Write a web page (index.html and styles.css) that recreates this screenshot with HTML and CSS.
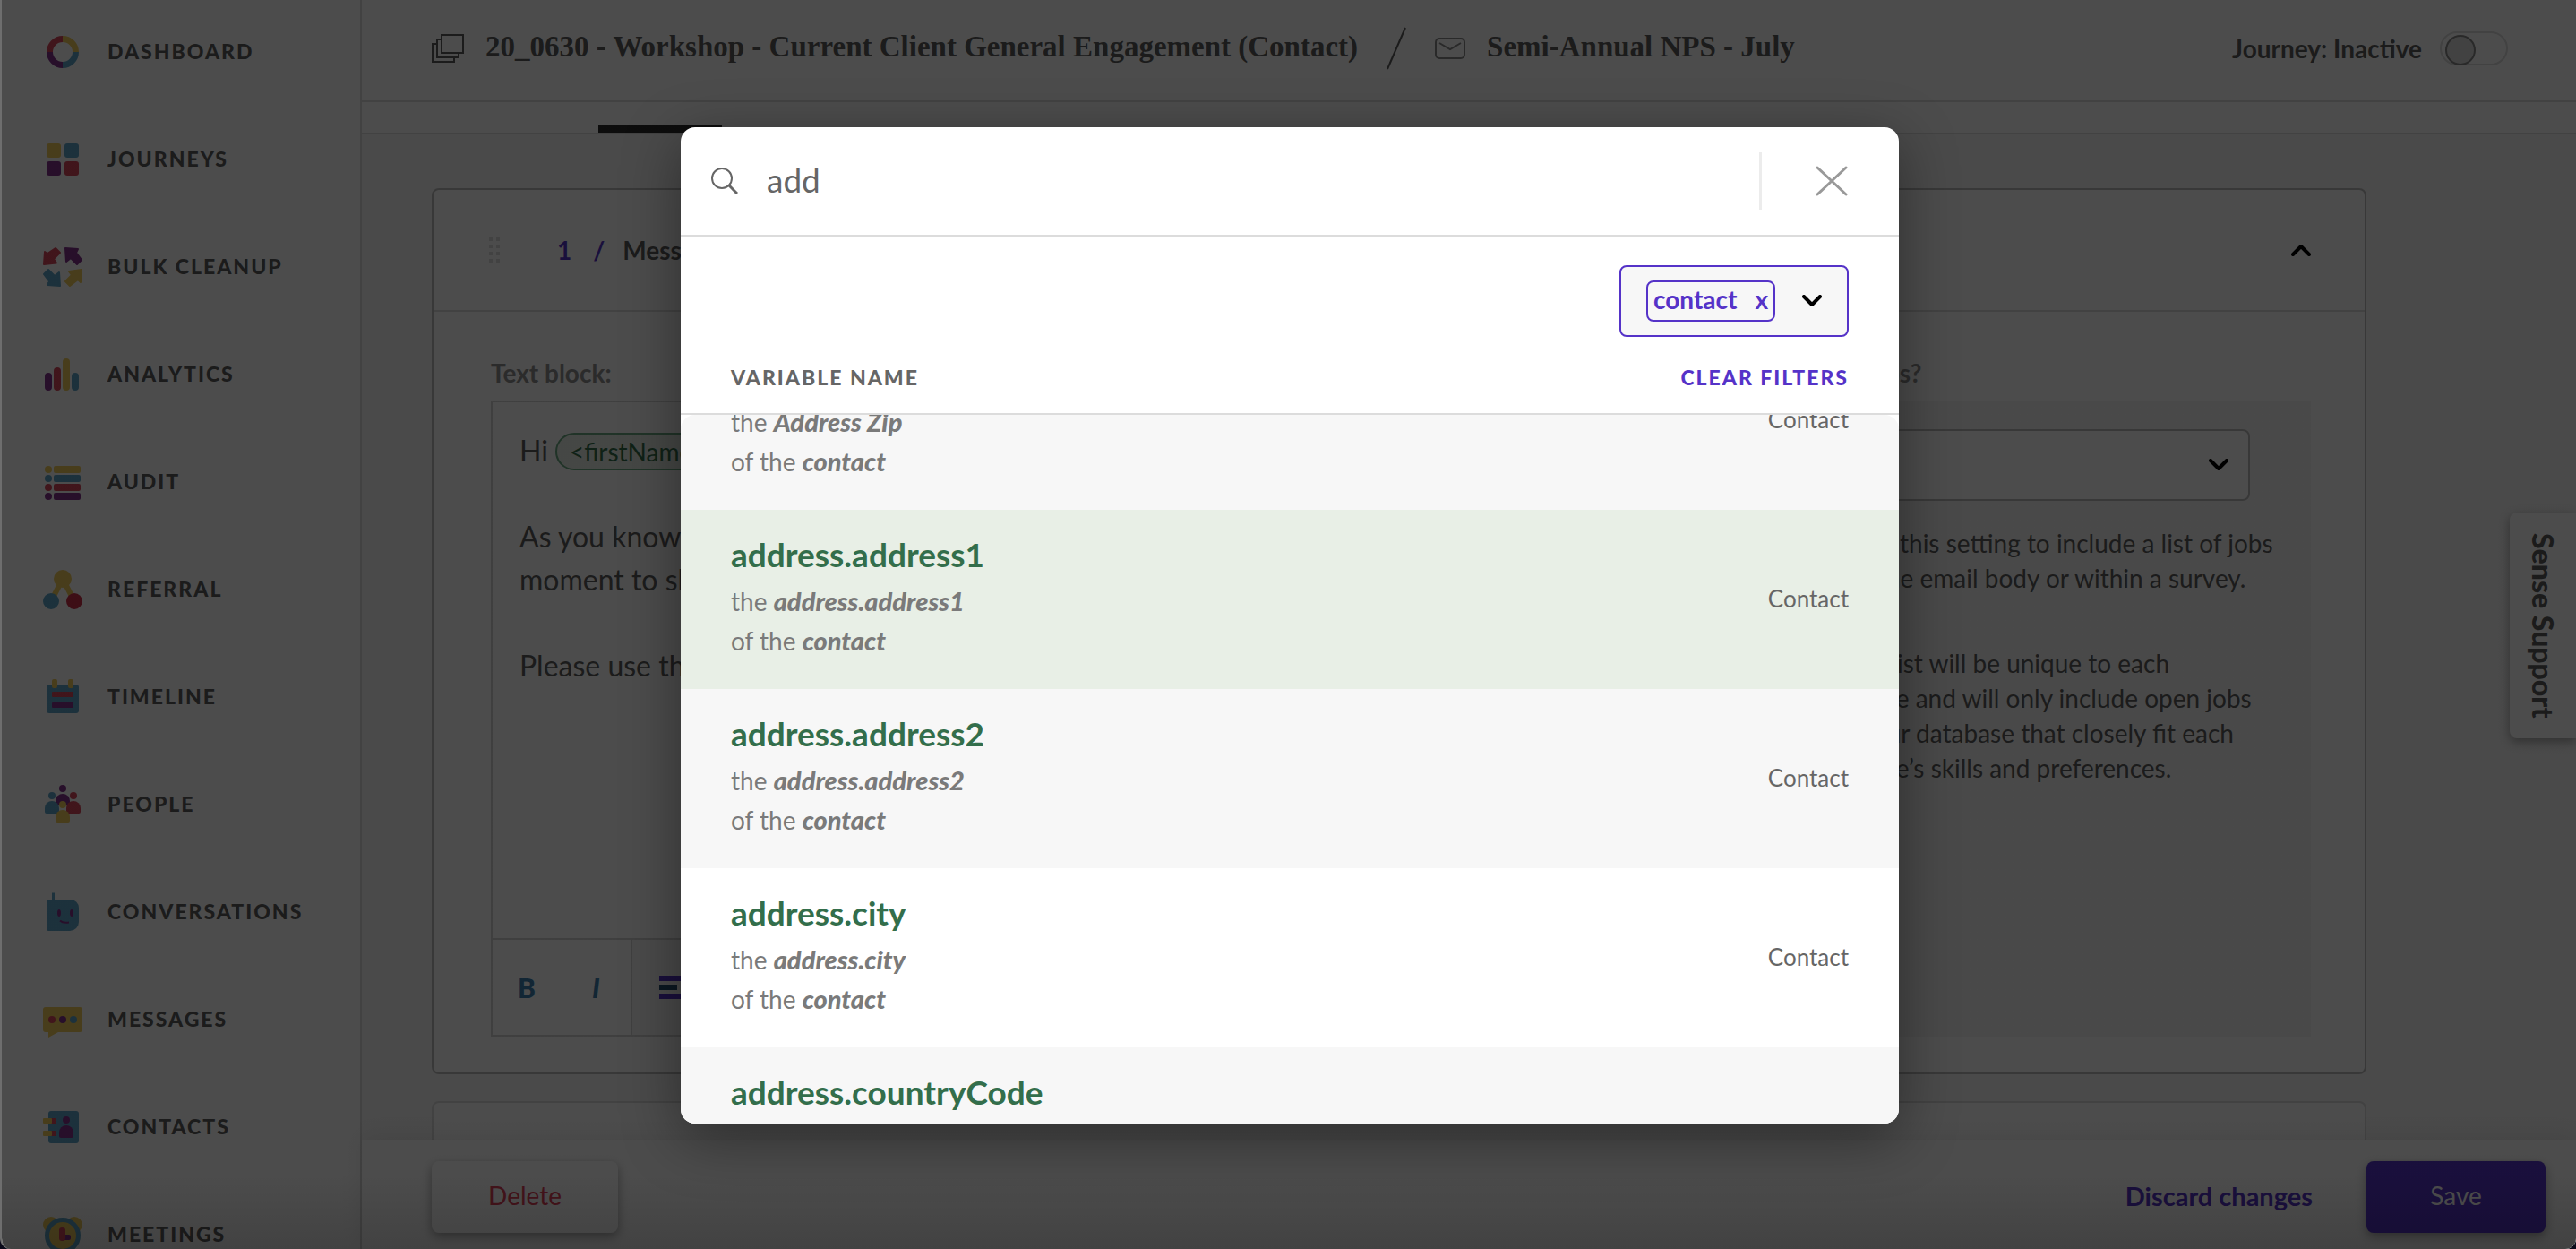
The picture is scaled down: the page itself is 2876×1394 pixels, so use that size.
FILE: index.html
```html
<!DOCTYPE html>
<html lang="en">
<head>
<meta charset="utf-8">
<title>Semi-Annual NPS - July</title>
<link rel="stylesheet" href="styles.css">
</head>
<body>
<div class="app">
  <nav class="sidebar" aria-label="Main">
    <a class="nav-item" href="#dashboard">
      <svg class="nav-icon" viewBox="0 0 44 44" fill="none" stroke-width="7"><path class="s-red" d="M7.500 23A14.500 14.500 0 0 1 22 8.500"/><path class="s-yellow" d="M22 8.500A14.500 14.500 0 0 1 36.500 23"/><path class="s-blue" d="M36.500 23A14.500 14.500 0 0 1 22 37.500"/><path class="s-purple" d="M22 37.500A14.500 14.500 0 0 1 7.500 23"/></svg>
      <span>DASHBOARD</span>
    </a>
    <a class="nav-item" href="#journeys">
      <svg class="nav-icon" viewBox="0 0 44 44"><rect class="yellow" x="4" y="5" width="16" height="16" rx="3"/><rect class="blue" x="24" y="5" width="16" height="16" rx="3"/><rect class="purple" x="4" y="25" width="16" height="16" rx="3"/><rect class="red" x="24" y="25" width="16" height="16" rx="3"/></svg>
      <span>JOURNEYS</span>
    </a>
    <a class="nav-item" href="#cleanup">
      <svg class="nav-icon" viewBox="0 0 44 44" stroke-width="2" stroke-linejoin="round"><path class="red s-red" d="M1 20L2 6L5 8L14 2L19 7L12 14L15 18.500Z"/><path class="purple s-purple" d="M25 2L39 3L37 7L43 15L38 20L31 13L26 17Z"/><path class="blue s-blue" d="M19 44L5 43L7 39L1 31L6 26L13 33L18 29Z"/><path class="yellow s-yellow" d="M43 26L42 40L39 37L30 44L25 39L32 32L29 28Z"/></svg>
      <span>BULK CLEANUP</span>
    </a>
    <a class="nav-item" href="#analytics">
      <svg class="nav-icon" viewBox="0 0 44 44"><rect class="purple" x="2" y="21" width="8" height="20" rx="4"/><rect class="red" x="12" y="15" width="8" height="26" rx="4"/><rect class="yellow" x="22" y="5" width="8" height="36" rx="4"/><rect class="blue" x="32" y="21" width="8" height="20" rx="4"/></svg>
      <span>ANALYTICS</span>
    </a>
    <a class="nav-item" href="#audit">
      <svg class="nav-icon" viewBox="0 0 44 44"><g class="yellow"><circle cx="6" cy="9" r="4"/><rect x="12" y="5" width="30" height="8" rx="2"/></g><g class="blue"><circle cx="6" cy="19" r="4"/><rect x="12" y="15" width="30" height="8" rx="2"/></g><g class="red"><circle cx="6" cy="29" r="4"/><rect x="12" y="25" width="30" height="8" rx="2"/></g><g class="purple"><circle cx="6" cy="39" r="4"/><rect x="12" y="35" width="30" height="8" rx="2"/></g></svg>
      <span>AUDIT</span>
    </a>
    <a class="nav-item" href="#referral">
      <svg class="nav-icon" viewBox="0 0 44 44"><path class="s-yellow" d="M9 36L22 11L35 36" fill="none" stroke-width="6"/><circle class="yellow" cx="22" cy="11" r="10"/><circle class="blue" cx="9" cy="36" r="9"/><circle class="crimson" cx="35" cy="36" r="9"/></svg>
      <span>REFERRAL</span>
    </a>
    <a class="nav-item" href="#timeline">
      <svg class="nav-icon" viewBox="0 0 44 44"><rect class="blue" x="4" y="9" width="36" height="32" rx="3"/><rect class="yellow" x="10" y="3" width="6" height="10" rx="2"/><rect class="yellow" x="28" y="3" width="6" height="10" rx="2"/><rect class="red" x="10" y="17" width="24" height="6" rx="1"/><rect class="purple" x="10" y="29" width="24" height="6" rx="1"/></svg>
      <span>TIMELINE</span>
    </a>
    <a class="nav-item" href="#people">
      <svg class="nav-icon" viewBox="0 0 44 44"><g class="purple"><circle cx="22" cy="5" r="4"/><path d="M14 24V19a8 8 0 0 1 16 0V24Z"/></g><g class="blue"><circle cx="10" cy="13" r="4"/><path d="M2 31V27a8 8 0 0 1 16 0V33H4a2 2 0 0 1-2-2Z"/></g><g class="red"><circle cx="34" cy="13" r="4"/><path d="M26 33V27a8 8 0 0 1 16 0V31a2 2 0 0 1-2 2Z"/></g><g class="yellow"><circle cx="22" cy="23" r="4"/><path d="M14 41V37a8 8 0 0 1 16 0V41a2 2 0 0 1-2 2H16a2 2 0 0 1-2-2Z"/></g></svg>
      <span>PEOPLE</span>
    </a>
    <a class="nav-item" href="#conversations">
      <svg class="nav-icon" viewBox="0 0 44 44"><path class="blue" d="M10 9V1.500h3V9H31a9 9 0 0 1 9 9V34a10 10 0 0 1-10 10H6a2 2 0 0 1-2-2V11a2 2 0 0 1 2-2Z"/><ellipse class="purple" cx="18" cy="24" rx="2" ry="4"/><ellipse class="purple" cx="32" cy="24" rx="2" ry="4"/><path class="s-purple" d="M19 32.500q3 3 10 2" fill="none" stroke-width="2"/></svg>
      <span>CONVERSATIONS</span>
    </a>
    <a class="nav-item" href="#messages">
      <svg class="nav-icon" viewBox="0 0 44 44"><path class="yellow" d="M3 9H41a3 3 0 0 1 3 3V34a3 3 0 0 1-3 3H17L6 43V37H3a3 3 0 0 1-3-3V12a3 3 0 0 1 3-3Z"/><circle class="red" cx="10" cy="23" r="4"/><circle class="purple" cx="22" cy="23" r="4"/><circle class="blue" cx="34" cy="23" r="4"/></svg>
      <span>MESSAGES</span>
    </a>
    <a class="nav-item" href="#contacts">
      <svg class="nav-icon" viewBox="0 0 44 44"><rect class="blue" x="6" y="5" width="34" height="36" rx="3"/><g class="red"><rect x="8" y="13" width="6" height="6"/><rect x="8" y="27" width="6" height="6"/></g><g class="yellow"><rect x="0" y="13" width="10" height="6" rx="1"/><rect x="0" y="27" width="10" height="6" rx="1"/></g><g class="purple"><circle cx="26" cy="15" r="4"/><path d="M18 33V29a8 8 0 0 1 16 0V33a2 2 0 0 1-2 2H20a2 2 0 0 1-2-2Z"/></g></svg>
      <span>CONTACTS</span>
    </a>
    <a class="nav-item" href="#meetings">
      <svg class="nav-icon" viewBox="0 0 44 44"><circle class="yellow" cx="9" cy="12" r="9"/><circle class="yellow" cx="35" cy="12" r="9"/><circle class="yellow s-blue" cx="22" cy="24" r="17.500" stroke-width="5"/><rect class="purple" x="22" y="23" width="9" height="6" rx="2"/><rect class="red" x="18" y="15" width="7" height="15" rx="3"/></svg>
      <span>MEETINGS</span>
    </a>
  </nav>

  <main class="main">
    <header class="header">
      <svg class="stack-icon" viewBox="0 0 36 34" fill="none" stroke="currentColor" stroke-width="2"><path d="M11 2H35V22H11Z"/><path d="M11 7H6V27H30V22M6 12H1V32H25V27"/></svg>
      <a class="crumb" href="#journey">20_0630 - Workshop - Current Client General Engagement (Contact)</a>
      <svg class="slash-icon" viewBox="0 0 22 48" fill="none" stroke="currentColor" stroke-width="2"><path d="M1 47L21 1"/></svg>
      <svg class="mail-icon" viewBox="0 0 34 24" fill="none" stroke="currentColor" stroke-width="2"><rect x="1" y="1" width="32" height="22" rx="4"/><path d="M5 6L17 13L29 6"/></svg>
      <h1 class="crumb">Semi-Annual NPS - July</h1>
      <label class="journey-switch">Journey: Inactive<input type="checkbox" class="switch"></label>
    </header>
    <div class="tabs"><a class="tab" href="#content" aria-label="Content"></a></div>

    <div class="content">
      <section class="card">
        <div class="card-head">
          <svg class="drag-icon" viewBox="0 0 12 28" fill="currentColor"><path d="M0 0h4v4H0zM8 0h4v4H8zM0 8h4v4H0zM8 8h4v4H8zM0 16h4v4H0zM8 16h4v4H8zM0 24h4v4H0zM8 24h4v4H8z"/></svg>
          <span class="card-number">1</span><span class="card-slash">/</span>
          <h2 class="card-title">Message</h2>
          <button class="icon-button" aria-label="Collapse"><svg class="chevron" viewBox="0 0 22 14"><path d="M2 12L11 3L20 12"/></svg></button>
        </div>
        <div class="card-body">
          <div class="field">
            <h3 class="field-label">Text block:</h3>
            <div class="editor">
              <div class="editor-text">
                <p>Hi <span class="token">&lt;firstName&gt;</span>,</p>
                <p>As you know, we value your feedback. Please take a<br>moment to share your thoughts with us.</p>
                <p>Please use the link below to get started.</p>
              </div>
              <div class="toolbar">
                <div class="tool-group">
                  <button class="tool">B</button><button class="tool tool-italic">I</button>
                </div>
                <button class="tool-align" aria-label="Align left"><svg class="align-icon" viewBox="0 0 28 26"><path fill="#5533c8" d="M0 0h28v6H0zM0 20h28v6H0z"/><path fill="#245070" d="M0 10h20v6H0z"/></svg></button>
              </div>
            </div>
          </div>
          <div class="field">
            <label class="field-label" for="jobs">Recommend jobs?</label>
            <div class="jobs-panel">
              <div class="select-wrap">
                <select id="jobs" class="jobs-select"><option>None</option></select>
                <svg class="chevron" viewBox="0 0 22 14"><path d="M2 2L11 11L20 2"/></svg>
              </div>
              <p>Activate this setting to include a list of jobs<br>within the email body or within a survey.</p>
              <p>The job list will be unique to each<br>candidate and will only include open jobs<br>from your database that closely fit each<br>candidate’s skills and preferences.</p>
            </div>
          </div>
        </div>
      </section>
      <section class="card card-next"></section>
    </div>

    <footer class="footer">
      <button class="btn btn-delete">Delete</button>
      <button class="btn-link">Discard changes</button>
      <button class="btn btn-save">Save</button>
    </footer>
  </main>

  <button class="support">Sense Support</button>

  <div class="overlay">
    <div class="modal" role="dialog" aria-label="Insert variable">
      <div class="search">
        <svg class="search-icon" viewBox="0 0 30 30" fill="none" stroke="currentColor" stroke-width="2"><circle cx="12" cy="12" r="11"/><path d="M20 20L29 29" stroke-width="3"/></svg>
        <input class="search-input" type="text" value="add" aria-label="Search variables">
        <button class="close" aria-label="Close"><svg class="close-icon" viewBox="0 0 36 34" fill="none" stroke="currentColor" stroke-width="3" stroke-linecap="round"><path d="M2 2L34 32M34 2L2 32"/></svg></button>
      </div>
      <div class="filters">
        <div class="filter-box">
          <button class="chip">contact<span>x</span></button>
          <button class="icon-button" aria-label="Open filters"><svg class="chevron" viewBox="0 0 22 14"><path d="M2 2L11 11L20 2"/></svg></button>
        </div>
        <div class="list-head">
          <span>VARIABLE NAME</span>
          <button class="clear">CLEAR FILTERS</button>
        </div>
      </div>
      <ul class="list" id="variables">
        <li><button class="row"><span class="name">address.zip</span><span class="desc">the <em>Address Zip</em><br>of the <em>contact</em></span><span class="entity">Contact</span></button></li>
        <li><button class="row row-active"><span class="name">address.address1</span><span class="desc">the <em>address.address1</em><br>of the <em>contact</em></span><span class="entity">Contact</span></button></li>
        <li><button class="row"><span class="name">address.address2</span><span class="desc">the <em>address.address2</em><br>of the <em>contact</em></span><span class="entity">Contact</span></button></li>
        <li><button class="row"><span class="name">address.city</span><span class="desc">the <em>address.city</em><br>of the <em>contact</em></span><span class="entity">Contact</span></button></li>
        <li><button class="row"><span class="name">address.countryCode</span><span class="desc">the <em>address.countryCode</em><br>of the <em>contact</em></span><span class="entity">Contact</span></button></li>
      </ul>
    </div>
  </div>
</div>
<script src="list.js"></script>
</body>
</html>
```
FILE: list.js
```js
// Bring the highlighted variable into view, keeping part of the previous row visible.
const list = document.getElementById('variables');
const active = list.querySelector('.row-active');
list.scrollTop = active.offsetTop - list.offsetTop - 106;
```
FILE: styles.css
```css
* { box-sizing: border-box; }

html { background: #0a0a1a; }

body {
  margin: 0;
  font-family: Lato, "Open Sans", sans-serif;
  font-size: 28px;
  color: #5c5c5c;
}

button, input, select { font: inherit; color: inherit; }
button { border: 0; padding: 0; background: none; text-align: left; cursor: pointer; }
a { color: inherit; text-decoration: none; }
h1, h2, h3, p, ul { margin: 0; padding: 0; }

.app {
  position: relative;
  display: flex;
  height: 100vh;
  overflow: hidden;
  background: #fff;
  border-left: 2px solid #6e6e6e;
  border-radius: 0 0 12px 12px;
}

/* Sidebar */
.sidebar {
  flex: none;
  width: 402px;
  display: flex;
  flex-direction: column;
  gap: 6px;
  overflow: hidden;
  border-right: 2px solid #dcdcdc;
}
.nav-item {
  flex: none;
  height: 114px;
  padding-left: 46px;
  display: flex;
  align-items: center;
  gap: 28px;
  font-size: 23px;
  font-weight: 900;
  letter-spacing: 2px;
}
.nav-icon { width: 44px; height: 44px; overflow: visible; }

.red { fill: #d8485c; }
.crimson { fill: #cc3048; }
.yellow { fill: #f0cc5c; }
.blue { fill: #5fa5c8; }
.purple { fill: #84328c; }
.s-red { stroke: #d8485c; }
.s-yellow { stroke: #f0cc5c; }
.s-blue { stroke: #5fa5c8; }
.s-purple { stroke: #84328c; }

/* Main column */
.main { flex: 1; min-width: 0; display: flex; flex-direction: column; }

.header {
  flex: none;
  height: 114px;
  padding: 0 76px 4px 78px;
  display: flex;
  align-items: center;
  border-bottom: 2px solid #dcdcdc;
}
.crumb {
  padding-bottom: 4px;
  font-family: "Liberation Serif", serif;
  font-size: 33px;
  font-weight: 700;
  line-height: 40px;
  white-space: nowrap;
}
.stack-icon { flex: none; width: 36px; height: 34px; margin-right: 24px; }
.slash-icon { flex: none; width: 22px; height: 48px; margin: 0 32px; }
.mail-icon { flex: none; width: 34px; height: 24px; margin-right: 24px; color: #8a8a8a; }
.journey-switch {
  margin-left: auto;
  display: flex;
  align-items: center;
  gap: 20px;
  font-weight: 700;
  white-space: nowrap;
}
.switch {
  appearance: none;
  margin: 0;
  width: 76px;
  height: 38px;
  padding: 2px 4px;
  border: 2px solid #dcdcdc;
  border-radius: 19px;
}
.switch::before {
  content: "";
  display: block;
  width: 30px;
  height: 30px;
  border: 2px solid #8a8a8a;
  border-radius: 50%;
  background: #dcdcdc;
}

.tabs {
  flex: none;
  height: 36px;
  padding-left: 264px;
  display: flex;
  align-items: flex-end;
  border-bottom: 2px solid #dcdcdc;
}
.tab { width: 138px; height: 8px; background: #2c2c2c; }

.content {
  flex: 1;
  min-height: 0;
  overflow: hidden;
  padding: 60px 234px 0 78px;
  background: #f7f7f7;
}
.card { background: #fff; border: 2px solid #bcbcbc; border-radius: 8px; }
.card-next { height: 200px; margin-top: 30px; border-color: #dcdcdc; }
.card-head {
  height: 136px;
  padding: 0 60px 0 62px;
  display: flex;
  align-items: center;
  border-bottom: 2px solid #dcdcdc;
}
.drag-icon { width: 12px; height: 28px; margin-right: 64px; color: #dcdcdc; }
.card-number, .card-slash { color: #5533c8; font-weight: 700; }
.card-slash { margin: 0 20px 0 24px; }
.card-title { font-size: 28px; font-weight: 700; }
.icon-button { display: flex; }
.card-head .icon-button { margin-left: auto; }

.chevron {
  width: 22px;
  height: 14px;
  fill: none;
  stroke: #000;
  stroke-width: 4;
  stroke-linecap: round;
  stroke-linejoin: round;
}

.card-body {
  display: grid;
  grid-template-columns: minmax(0, 1fr) 660px;
  gap: 64px;
  padding: 50px 60px 40px 64px;
}
.field { display: flex; flex-direction: column; gap: 13px; }
.field-label { font-size: 28px; font-weight: 700; line-height: 36px; color: #909090; }

.editor { border: 2px solid #d4d4d4; display: flex; flex-direction: column; }
.editor-text { height: 598px; padding: 30px; font-size: 32px; line-height: 48px; }
.editor-text p + p { margin-top: 48px; }
.token {
  display: inline-block;
  height: 42px;
  padding: 0 14px;
  border: 2px solid #6cab84;
  border-radius: 21px;
  background: #e8efe6;
  color: #336e4b;
  font-size: 28px;
  line-height: 38px;
}
.toolbar { height: 108px; display: flex; border-top: 2px solid #d4d4d4; background: #f7f7f7; }
.tool-group { display: flex; width: 156px; background: #fff; border-right: 2px solid #d4d4d4; }
.tool { flex: 1; padding-left: 28px; font-size: 30px; font-weight: 900; color: #3d80b0; }
.tool-italic { padding-left: 40px; font-style: italic; }
.tool-align { padding-left: 30px; }
.align-icon { display: block; width: 28px; height: 26px; }

.jobs-panel {
  flex: 1;
  padding: 32px 68px;
  background: #f5f5f5;
  line-height: 39px;
  white-space: nowrap;
}
.jobs-panel p { margin-bottom: 56px; padding-left: 24px; }
.select-wrap {
  display: flex;
  align-items: center;
  height: 80px;
  margin-bottom: 28px;
  padding-right: 22px;
  border: 2px solid #bcbcbc;
  border-radius: 8px;
  background: #fff;
}
.jobs-select { flex: 1; appearance: none; border: 0; padding: 0 20px; background: none; }

.footer {
  flex: none;
  height: 122px;
  padding: 6px 34px 0 78px;
  display: flex;
  align-items: center;
  background: #fff;
  box-shadow: 0 -4px 24px rgba(0, 0, 0, .08);
}
.btn {
  height: 80px;
  padding-bottom: 4px;
  border-radius: 8px;
  text-align: center;
  box-shadow: 0 4px 12px rgba(0, 0, 0, .35);
}
.btn-delete { width: 208px; color: #e04058; }
.btn-save { width: 200px; background: #5533c8; color: #fff; }
.btn-link {
  margin: 0 60px 0 auto;
  padding-bottom: 4px;
  color: #5533c8;
  font-size: 29px;
  font-weight: 700;
}

.support {
  position: absolute;
  right: 0;
  top: 572px;
  width: 74px;
  height: 252px;
  writing-mode: vertical-rl;
  text-align: center;
  font-size: 32px;
  font-weight: 900;
  background: #fff;
  border-radius: 8px 0 0 8px;
  box-shadow: 0 4px 12px rgba(0, 0, 0, .35);
}

/* Variable picker */
.overlay {
  position: absolute;
  inset: 0;
  padding: 142px 140px 140px 142px;
  display: flex;
  justify-content: center;
  background: linear-gradient(rgba(0, 0, 0, .7) 94%, rgba(0, 0, 0, .74));
}
.modal {
  width: 100%;
  max-width: 1360px;
  display: flex;
  flex-direction: column;
  overflow: hidden;
  background: #fff;
  border-radius: 16px;
  box-shadow: 0 16px 64px rgba(0, 0, 0, .4);
  color: #666;
}
.search {
  flex: none;
  height: 122px;
  padding-left: 34px;
  display: flex;
  align-items: center;
  border-bottom: 2px solid #dcdcdc;
}
.search-icon { flex: none; width: 30px; height: 30px; }
.search-input {
  flex: 1;
  margin-left: 32px;
  border: 0;
  padding: 0 0 4px;
  outline: 0;
  background: none;
  font-size: 37px;
}
.close {
  height: 64px;
  width: 156px;
  padding-left: 60px;
  border-left: 3px solid #ececec;
  color: #999;
}
.close-icon { display: block; width: 36px; height: 34px; }

.filters { flex: none; padding: 32px 56px 0; border-bottom: 2px solid #dcdcdc; }
.filter-box {
  width: 256px;
  height: 80px;
  margin-left: auto;
  padding: 0 28px;
  display: flex;
  align-items: center;
  justify-content: space-between;
  border: 2px solid #5533c8;
  border-radius: 8px;
  background: #f7f7f7;
}
.chip {
  height: 46px;
  padding: 0 6px 4px;
  display: flex;
  align-items: center;
  gap: 20px;
  border: 2px solid #5533c8;
  border-radius: 8px;
  color: #5533c8;
  font-weight: 700;
}
.list-head {
  height: 85px;
  padding-top: 4px;
  display: flex;
  align-items: center;
  justify-content: space-between;
  font-size: 23px;
  font-weight: 900;
  letter-spacing: 2px;
}
.clear { color: #5533c8; letter-spacing: 2px; }

.list {
  flex: 1;
  min-height: 0;
  overflow-y: auto;
  scrollbar-width: none;
  list-style: none;
  border-radius: 16px 16px 0 0;
}
.row {
  width: 100%;
  height: 200px;
  padding: 26px 56px 0;
  display: grid;
  grid-template-columns: 1fr auto;
  grid-template-rows: 54px 88px;
  align-content: start;
  background: #fff;
}
li:nth-child(odd) .row { background: #f7f7f7; }
.row-active, li:nth-child(even) .row-active { background: #e8efe6; }
.name { font-size: 37px; line-height: 48px; font-weight: 700; color: #336e4b; }
.desc { grid-row: 2; line-height: 44px; color: #7a7a7a; }
.desc em { font-size: 29px; font-weight: 900; }
.entity { grid-row: 1 / 3; grid-column: 2; align-self: center; padding-top: 4px; font-size: 26px; }
```
